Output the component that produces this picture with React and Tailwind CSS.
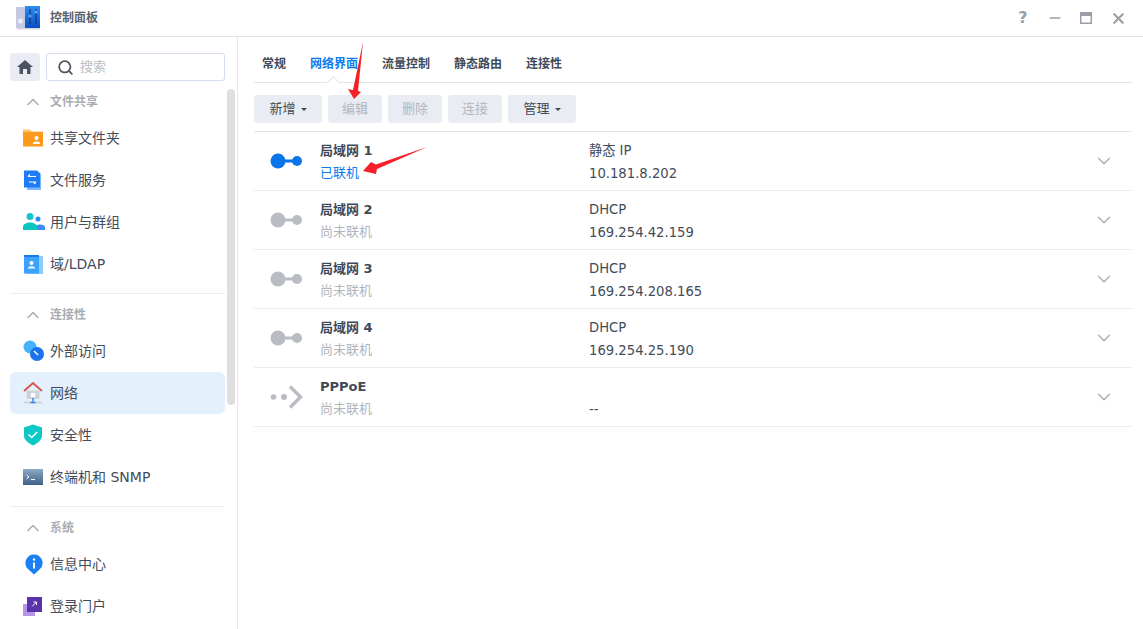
import { Search, ChevronUp, ChevronDown, Minus, X } from "lucide-react";

const FONT = "font-['DejaVu_Sans','Noto_Sans_CJK_SC',sans-serif]";

//! Sidebar icons
const FolderIcon = () => (
  <svg width="20" height="20" viewBox="0 0 20 20">
    <path d="M0 1.5h7l2 2h11v4H0z" fill="#fbc56b" />
    <path d="M0 4h20v14.5H0z" fill="#fb9a1c" />
    <circle cx="13.5" cy="10" r="2" fill="#fff" />
    <path d="M10 15c0-2 7-2 7 0v1h-7z" fill="#fff" />
  </svg>
);
const FileServiceIcon = () => (
  <svg width="20" height="20" viewBox="0 0 20 20">
    <path d="M4 2h12l2 2v16H4z" fill="#7cb8ff" />
    <path d="M1 .5h13l3 3V17.500H1z" fill="#1f7cf6" />
    <path d="M5 6.500h8M5 6.500l2-2M13 12H6M13 12l-2 2" stroke="#fff" strokeWidth="1.200" fill="none" />
  </svg>
);
const UsersIcon = () => (
  <svg width="22" height="20" viewBox="0 0 22 20">
    <circle cx="15" cy="7" r="2.500" fill="#2f8bf7" />
    <path d="M11 18c0-7 11-7 11-2.500V18z" fill="#3b8ef8" />
    <circle cx="7" cy="4.500" r="3.500" fill="#12c4cc" />
    <path d="M0 18v-3c0-6 14-6 14 0v3z" fill="#07c6c0" />
  </svg>
);
const LdapIcon = () => (
  <svg width="20" height="20" viewBox="0 0 20 20">
    <rect x="3" y="2" width="17" height="18" fill="#8ecbff" />
    <path d="M1 1h15v18.500H1z" fill="#3aa3fb" />
    <path d="M1 1h15v2H1z" fill="#1e78ec" />
    <circle cx="8.500" cy="9" r="2" fill="#fff" />
    <path d="M5 14.500c0-3 7-3 7 0z" fill="#fff" />
  </svg>
);
const GlobeIcon = () => (
  <svg width="22" height="22" viewBox="0 0 22 22">
    <circle cx="7" cy="7" r="6.500" fill="#45b3fb" />
    <circle cx="14" cy="14" r="7" fill="#1c74ec" />
    <path d="M11 11l4 4" stroke="#fff" strokeWidth="1.500" />
  </svg>
);
const NetworkIcon = () => (
  <svg width="20" height="22" viewBox="0 0 20 22">
    <path d="M3.500 8.500h13V17h-13z" fill="#cfd2d6" />
    <path d="M1 9l9-8 9 8" fill="none" stroke="#d9534f" strokeWidth="1.800" />
    <rect x="8" y="11" width="4" height="4" fill="#fff" />
    <rect x="1" y="19.500" width="18" height="2" fill="#cfd4da" />
    <path d="M10 16v3.500M7.500 20.500h5" stroke="#2c86ee" strokeWidth="1.500" />
  </svg>
);
const ShieldIcon = () => (
  <svg width="20" height="22" viewBox="0 0 20 22">
    <path d="M10 .5l9 3v8.500c0 4-5 7.500-9 9.500-4-2-9-5.500-9-9.500V3.500z" fill="#0cc9c6" />
    <path d="M5.500 10.500l3.200 3 5.500-5.500" fill="none" stroke="#fff" strokeWidth="1.600" />
  </svg>
);
const TerminalIcon = () => (
  <svg width="20" height="16" viewBox="0 0 20 16">
    <defs>
      <linearGradient id="term" x1="0" y1="0" x2="0" y2="1">
        <stop offset="0" stopColor="#8daac6" />
        <stop offset="1" stopColor="#3f6289" />
      </linearGradient>
    </defs>
    <rect width="20" height="16" fill="url(#term)" />
    <path d="M3.500 6l2.500 2-2.500 2M8 10.500h4" stroke="#fff" fill="none" />
  </svg>
);
const InfoIcon = () => (
  <svg width="20" height="21" viewBox="0 0 20 21">
    <path d="M11 .5a8.500 8.500 0 0 1 5.500 15L11 20.500 5.500 15.500A8.500 8.500 0 0 1 11 .5z" fill="#1c7ff3" />
    <circle cx="11" cy="5.500" r="1.200" fill="#fff" />
    <path d="M11 8.500v6" stroke="#fff" strokeWidth="2" />
  </svg>
);
const PortalIcon = () => (
  <svg width="20" height="20" viewBox="0 0 20 20">
    <rect x="0" y="8" width="12" height="12" fill="#b594ea" />
    <rect x="4" y="1" width="15" height="15" fill="#5a32ab" />
    <path d="M9 10.500l4.500-4.500M10.500 6h3v3" stroke="#fff" fill="none" />
  </svg>
);

const sidebar = [
  {
    title: "文件共享",
    items: [
      { label: "共享文件夹", icon: <FolderIcon /> },
      { label: "文件服务", icon: <FileServiceIcon /> },
      { label: "用户与群组", icon: <UsersIcon /> },
      { label: "域/LDAP", icon: <LdapIcon /> },
    ],
  },
  {
    title: "连接性",
    items: [
      { label: "外部访问", icon: <GlobeIcon /> },
      { label: "网络", icon: <NetworkIcon />, active: true },
      { label: "安全性", icon: <ShieldIcon /> },
      { label: "终端机和 SNMP", icon: <TerminalIcon /> },
    ],
  },
  {
    title: "系统",
    items: [
      { label: "信息中心", icon: <InfoIcon /> },
      { label: "登录门户", icon: <PortalIcon /> },
    ],
  },
];

const tabs = ["常规", "网络界面", "流量控制", "静态路由", "连接性"];

const lanRows = [
  { name: "局域网 1", status: "已联机", mode: "静态 IP", ip: "10.181.8.202", on: true },
  { name: "局域网 2", status: "尚未联机", mode: "DHCP", ip: "169.254.42.159" },
  { name: "局域网 3", status: "尚未联机", mode: "DHCP", ip: "169.254.208.165" },
  { name: "局域网 4", status: "尚未联机", mode: "DHCP", ip: "169.254.25.190" },
  { name: "PPPoE", status: "尚未联机", mode: "", ip: "--", pppoe: true },
];

const LinkIcon = ({ on }) => (
  <svg width="32" height="16" viewBox="0 0 32 16">
    <circle cx="8" cy="8" r="7.500" fill={on ? "#0a75e8" : "#b9bcc2"} />
    <rect x="12" y="6.500" width="14" height="3" fill={on ? "#0a75e8" : "#b9bcc2"} />
    <circle cx="27" cy="8" r="5" fill={on ? "#0a75e8" : "#b9bcc2"} />
  </svg>
);

const PppoeIcon = () => (
  <svg width="34" height="26" viewBox="0 0 34 26">
    <circle cx="3.500" cy="13" r="2.800" fill="#b9bcc2" />
    <circle cx="14" cy="13" r="3" fill="#b9bcc2" />
    <path d="M20 2.500L30.500 13 20 23.500" fill="none" stroke="#b9bcc2" strokeWidth="3.500" />
  </svg>
);

const ToolButton = ({ label, disabled, caret, width }) => (
  <div
    className={`h-7 rounded-[3px] bg-[#e9edf3] flex items-center justify-center gap-[5px] text-[13px] ${width} ${
      disabled ? "text-[#b2b6bc]" : "text-[#3f4a59]"
    }`}
  >
    {label}
    {caret && <span className="w-0 h-0 border-x-[3px] border-x-transparent border-t-[3px] border-t-[#3f4a59]" />}
  </div>
);

export default function App() {
  return (
    <div className={`${FONT} w-[1143px] h-[629px] bg-white overflow-hidden flex flex-col relative`}>
      {/* title bar */}
      <div className="h-[37px] shrink-0 border-b border-[#dfe5ee] flex items-center pl-4 pr-[16px]">
        <svg width="24" height="24" viewBox="0 0 24 24">
          <defs>
            <linearGradient id="panelBlue" x1="0" y1="0" x2="0" y2="1">
              <stop offset="0" stopColor="#2f8df0" />
              <stop offset="1" stopColor="#0a4fc4" />
            </linearGradient>
          </defs>
          <rect x="0" y="1" width="10" height="21" fill="#c4c8e2" />
          <circle cx="4.500" cy="15" r="2.500" fill="#eceef5" />
          <rect x="9" y="0" width="15" height="22" fill="url(#panelBlue)" />
          <path d="M14 3v15M20 3v15" stroke="#0b2a66" />
          <circle cx="14" cy="10" r="1.500" fill="#5ba6ff" />
          <circle cx="20" cy="6" r="1.500" fill="#5ba6ff" />
          <rect x="1" y="22" width="23" height="1.500" fill="#d5d7dd" />
        </svg>
        <span className="ml-[10px] text-[12px] font-bold text-[#5a626e]">控制面板</span>
        <div className="ml-auto flex items-center text-[#9a9ea6]">
          <span className="w-4 text-center text-[16px] font-bold leading-none">?</span>
          <Minus size={16} strokeWidth={2.500} className="ml-[16px]" />
          <svg width="12" height="12" viewBox="0 0 12 12" className="ml-[17px]">
            <path d="M0 0h12v12H0z" fill="#9a9ea6" />
            <path d="M1.500 4h9v6.500h-9z" fill="#fff" />
          </svg>
          <X size={17} strokeWidth={3} className="ml-[18px]" />
        </div>
      </div>

      <div className="flex flex-1 min-h-0">
        {/* sidebar */}
        <aside className="w-[238px] shrink-0 border-r border-[#e3e7ee] relative overflow-hidden pt-4">
          <div className="flex gap-1.5 pl-[10px] pr-3">
            <div className="w-[30px] h-7 rounded-[3px] bg-[#e9edf3] flex items-center justify-center">
              <svg width="16" height="14" viewBox="0 0 16 14">
                <path d="M8 0L0 7h2.500v7h3.500V9h4v5h3.500V7H16z" fill="#4a5361" />
              </svg>
            </div>
            <div className="w-[179px] h-7 rounded-[3px] border border-[#d3dfec] flex items-center pl-2.5 gap-1.5">
              <Search size={17} strokeWidth={2.500} className="text-[#4f5762]" />
              <span className="text-[13px] text-[#b9bdc3]">搜索</span>
            </div>
          </div>

          <div className="w-[215px] ml-[10px] mt-2">
            {sidebar.map((group, i) => (
              <div key={group.title} className={i > 0 ? "border-t border-[#e9edf2] mt-2" : ""}>
                <div className={`flex items-center pl-[13px] text-[#a9adb3] ${i > 0 ? "h-9 pt-1.5" : "h-6 pt-0.5 mb-1"}`}>
                  <ChevronUp size={20} strokeWidth={1.800} />
                  <span className="ml-[7px] text-[12px] font-bold">{group.title}</span>
                </div>
                {group.items.map((item) => (
                  <div
                    key={item.label}
                    className={`h-[42px] flex items-center rounded-md ${item.active ? "bg-[#e4f0fc]" : ""}`}
                  >
                    <div className="w-10 flex justify-end shrink-0">
                      <div className="w-[27px] flex justify-start">{item.icon}</div>
                    </div>
                    <span className="text-[14px] text-[#434c5a]">{item.label}</span>
                  </div>
                ))}
              </div>
            ))}
          </div>

          {/* scrollbar */}
          <div className="absolute left-[227px] top-[52px] w-2 h-[316px] rounded bg-[#dfdfdf]" />
        </aside>

        {/* main */}
        <main className="flex-1 min-w-0 pl-4 pr-[11px]">
          <div className="h-[46px] border-b border-[#dfe5ee] flex items-end gap-6 pl-2 pb-[9px] relative">
            {tabs.map((tab, i) => (
              <span
                key={tab}
                className={`text-[12px] font-bold leading-[18px] ${i === 1 ? "text-[#0a7cf0]" : "text-[#3f4a59]"}`}
              >
                {tab}
              </span>
            ))}
            <span className="absolute left-[75px] bottom-[-5px] w-[9px] h-[9px] rotate-45 bg-white border-l border-t border-[#dfe5ee]" />
          </div>

          <div className="flex gap-1.5 mt-3">
            <ToolButton label="新增" caret width="w-[68px]" />
            <ToolButton label="编辑" disabled width="w-[54px]" />
            <ToolButton label="删除" disabled width="w-[54px]" />
            <ToolButton label="连接" disabled width="w-[54px]" />
            <ToolButton label="管理" caret width="w-[68px]" />
          </div>

          <div className="mt-2 border-t border-[#dfe5ee]">
            {lanRows.map((row) => (
              <div key={row.name} className="h-[59px] border-b border-[#e9edf2] flex items-center">
                <div className="w-[66px] pl-4 shrink-0 flex items-center">
                  {row.pppoe ? <PppoeIcon /> : <LinkIcon on={row.on} />}
                </div>
                <div className="w-[269px] shrink-0 flex flex-col gap-1 pt-0.5">
                  <span className="text-[13px] leading-[18px] font-bold text-[#3f4a59]">{row.name}</span>
                  <span className={`text-[13px] leading-[18px] ${row.on ? "text-[#0a7cf0]" : "text-[#b2b6bc]"}`}>
                    {row.status}
                  </span>
                </div>
                <div className="flex flex-col gap-[5px] pt-[3px] text-[13.200px] leading-[18px] text-[#434c5a]">
                  <span className="h-[18px]">{row.mode}</span>
                  <span>{row.ip}</span>
                </div>
                <ChevronDown size={22} strokeWidth={1.500} className="ml-auto mr-[17px] text-[#a9adb3]" />
              </div>
            ))}
          </div>
        </main>
      </div>

      {/* annotation arrows */}
      <svg className="absolute inset-0 pointer-events-none" width="1143" height="629" viewBox="0 0 1143 629">
        <path d="M363 42L358 91l3 1-7 7-6-10 5 1z" fill="#f5202a" />
        <path d="M427 147L376 164.500l-5-2.500-8 9 13 3 1-5z" fill="#f5202a" />
      </svg>
    </div>
  );
}
